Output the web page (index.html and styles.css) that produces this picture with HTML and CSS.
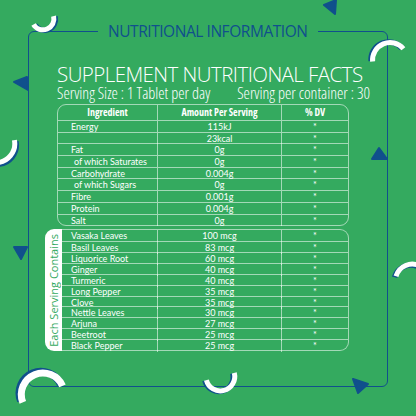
FILE: index.html
```html
<!DOCTYPE html>
<html>
<head>
<meta charset="utf-8">
<link rel="stylesheet" href="styles.css">
</head>
<body>
<div class="page">
  <fieldset class="frame">
    <legend>NUTRITIONAL INFORMATION</legend>
    <h1 class="title">SUPPLEMENT NUTRITIONAL FACTS</h1>
    <div class="serving"><span>Serving Size : 1 Tablet per day</span><span>Serving per container : 30</span></div>
    <div class="tbl t1">
      <div class="row head"><span>Ingredient</span><span>Amount Per Serving</span><span>% DV</span></div>
      <div class="row"><span>Energy</span><span>115kJ</span><span>*</span></div>
      <div class="row"><span></span><span>23kcal</span><span>*</span></div>
      <div class="row"><span>Fat</span><span>0g</span><span>*</span></div>
      <div class="row"><span class="sub">of which Saturates</span><span>0g</span><span>*</span></div>
      <div class="row"><span>Carbohydrate</span><span>0.004g</span><span>*</span></div>
      <div class="row"><span class="sub">of which Sugars</span><span>0g</span><span>*</span></div>
      <div class="row"><span>Fibre</span><span>0.001g</span><span>*</span></div>
      <div class="row"><span>Protein</span><span>0.004g</span><span>*</span></div>
      <div class="row"><span>Salt</span><span>0g</span><span>*</span></div>
    </div>
    <div class="t2wrap">
      <div class="side"><span>Each Serving Contains</span></div>
      <div class="tbl t2">
        <div class="row"><span>Vasaka Leaves</span><span>100 mcg</span><span>*</span></div>
        <div class="row"><span>Basil Leaves</span><span>83 mcg</span><span>*</span></div>
        <div class="row"><span>Liquorice Root</span><span>60 mcg</span><span>*</span></div>
        <div class="row"><span>Ginger</span><span>40 mcg</span><span>*</span></div>
        <div class="row"><span>Turmeric</span><span>40 mcg</span><span>*</span></div>
        <div class="row"><span>Long Pepper</span><span>35 mcg</span><span>*</span></div>
        <div class="row"><span>Clove</span><span>35 mcg</span><span>*</span></div>
        <div class="row"><span>Nettle Leaves</span><span>30 mcg</span><span>*</span></div>
        <div class="row"><span>Arjuna</span><span>27 mcg</span><span>*</span></div>
        <div class="row"><span>Beetroot</span><span>25 mcg</span><span>*</span></div>
        <div class="row"><span>Black Pepper</span><span>25 mcg</span><span>*</span></div>
      </div>
    </div>
  </fieldset>
  <svg class="deco" width="416" height="416" viewBox="0 0 416 416">
    <g fill="none" stroke-linecap="butt">
      <!-- top-left arc -->
      <path d="M35 25 A11 11 0 0 0 55.1 16.7" stroke="#10508c" stroke-width="5.5"/>
      <path d="M33.5 24.5 A11 11 0 0 0 53.6 16.2" stroke="#fff" stroke-width="5"/>
      <!-- top-right arc -->
      <path d="M371.1 61 A17.5 17.5 0 0 1 401.9 48.25" stroke="#10508c" stroke-width="5.5"/>
      <path d="M372.6 61.5 A17.5 17.5 0 0 1 403.4 48.75" stroke="#fff" stroke-width="5"/>
      <!-- left arc -->
      <path d="M15.9 141.6 A19 19 0 0 1 -2.5 164.2" stroke="#10508c" stroke-width="5.5"/>
      <path d="M14.4 140.1 A19 19 0 0 1 -4 162.7" stroke="#fff" stroke-width="5"/>
      <!-- right arc -->
      <path d="M394.5 277.2 A17 17 0 0 1 418.5 267" stroke="#10508c" stroke-width="5.5"/>
      <path d="M396 276.2 A17 17 0 0 1 420 266" stroke="#fff" stroke-width="5"/>
      <!-- bottom-left arc -->
      <path d="M20.8 400.9 A21.5 21.5 0 0 1 60.5 384.4" stroke="#10508c" stroke-width="7.5"/>
      <path d="M22.8 402.4 A21.5 21.5 0 0 1 62.5 385.9" stroke="#fff" stroke-width="7"/>
      <!-- bottom-center arc -->
      <path d="M204.9 380.6 A14 14 0 0 0 232.8 373.4" stroke="#10508c" stroke-width="5.5"/>
      <path d="M206.4 380.1 A14 14 0 0 0 234.3 372.9" stroke="#fff" stroke-width="5"/>
    </g>
    <g fill="#10508c" stroke="#10508c" stroke-width="2" stroke-linejoin="round">
      <polygon points="324,5 336,0 335,14"/>
      <polygon points="14,82 27,77 28,90"/>
      <polygon points="14,247 27,247 21,259"/>
      <polygon points="379,148 372,159 387,159"/>
      <polygon points="353,379 368,384 358,393"/>
    </g>
  </svg>
</div>
</body>
</html>
```
FILE: styles.css
```css
* { box-sizing: border-box; }
html, body { margin: 0; padding: 0; }
body { background: #34aa5f; }

.page {
  position: relative;
  width: 416px;
  height: 416px;
  overflow: hidden;
  background: #34aa5f;
  padding: 21px 28px 0 28px;
  font-family: "Open Sans", "Noto Sans", sans-serif;
  color: #fff;
}

.frame {
  margin: 0;
  min-width: 0;
  height: 366px;
  border: 1.5px solid #10508c;
  border-radius: 6px;
  padding: 0 14px 0 16px;
}

.frame legend {
  margin-left: 53px;
  padding: 0 10px;
  font-size: 15.5px;
  letter-spacing: -0.45px;
  line-height: 20px;
  color: #10508c;
  font-weight: 400;
}

.title {
  margin: 22px 0 0 12px;
  font-size: 20.5px;
  letter-spacing: -0.55px;
  line-height: 22px;
  font-weight: 300;
  white-space: nowrap;
}

.serving {
  margin-left: 12px;
  width: 313px;
  display: flex;
  justify-content: space-between;
  font-size: 16px;
  line-height: 16px;
  font-weight: 300;
  font-stretch: 75%;
  white-space: nowrap;
}

.tbl {
  border: 1px solid rgba(255, 255, 255, 0.55);
  font-family: Lato, "Open Sans", sans-serif;
  font-size: 9px;
  font-weight: 400;
}

.t1 {
  margin: 3px 0 0 12px;
  width: 292px;
  border-radius: 9px;
}

.row {
  display: grid;
  grid-template-columns: 99px 124px 1fr;
  height: 11.7px;
  line-height: 11px;
  white-space: nowrap;
}

.row + .row { border-top: 1px solid rgba(255, 255, 255, 0.55); }

.row > span { padding-left: 13px; }
.row > span + span {
  padding-left: 0;
  text-align: center;
  border-left: 1px solid rgba(255, 255, 255, 0.55);
}
.row > span.sub { padding-left: 16px; }

.row.head {
  height: 15px;
  line-height: 15px;
  font-family: "Open Sans", sans-serif;
  font-size: 10px;
  font-weight: 700;
  font-stretch: 75%;
}
.row.head > span:first-child { padding-left: 0; text-align: center; }

.t2wrap {
  margin-top: 3px;
  display: flex;
  width: 304px;
}

.side {
  width: 17px;
  height: 122px;
  background: #fff;
  border-radius: 9px 0 0 9px;
  display: flex;
  align-items: center;
  justify-content: center;
}
.side span {
  writing-mode: vertical-rl;
  transform: rotate(180deg);
  color: #34aa5f;
  font-size: 11px;
  line-height: 14px;
  white-space: nowrap;
}

.t2 {
  width: 287px;
  height: 122px;
  border-left: none;
  border-radius: 0 9px 9px 0;
}
.t2 .row {
  grid-template-columns: 95px 124px 1fr;
  height: 10.9px;
  line-height: 12px;
}
.t2 .row > span:first-child { padding-left: 9px; }

.deco {
  position: absolute;
  left: 0;
  top: 0;
  pointer-events: none;
}
```
